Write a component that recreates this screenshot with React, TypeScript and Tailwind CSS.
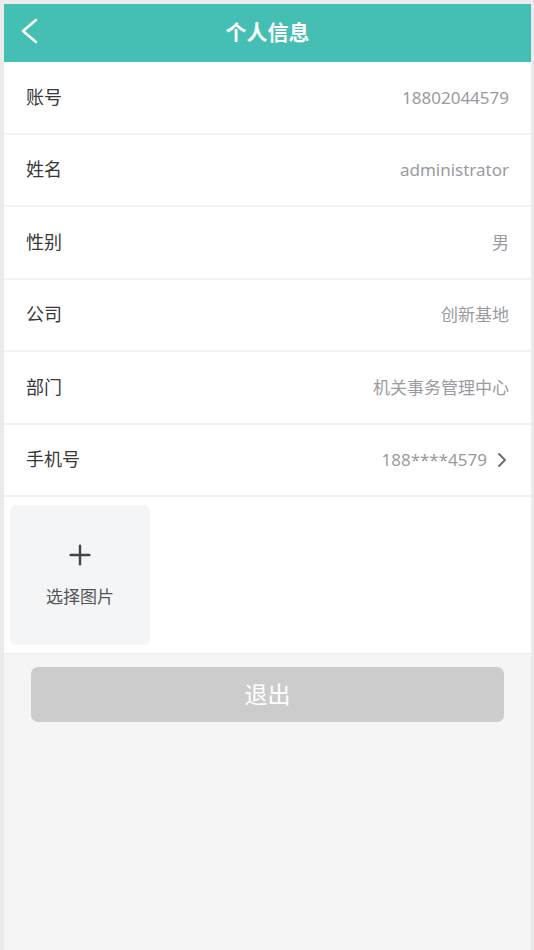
import { Plus } from 'lucide-react';

const FONT = { fontFamily: '"Noto Sans", "Noto Sans CJK SC", sans-serif' };

const ROWS = [
  { label: '账号', value: '18802044579' },
  { label: '姓名', value: 'administrator' },
  { label: '性别', value: '男' },
  { label: '公司', value: '创新基地' },
  { label: '部门', value: '机关事务管理中心' },
  { label: '手机号', value: '188****4579', arrow: true },
];

export default function App() {
  return (
    <div
      className="w-[534px] h-[950px] bg-[#f5f5f5] border-l-4 border-t-4 border-r-[3px] border-[#ebebeb] flex flex-col"
      style={FONT}
    >
      {/* 顶部栏 */}
      <div className="h-[58px] bg-[#45bfb3] flex items-center relative shrink-0">
        <svg className="absolute left-[14px] top-[12px]" width="24" height="30" viewBox="0 0 24 30" fill="none">
          <polyline points="18,4 5,15 18,26" stroke="white" strokeWidth="2.6" strokeLinecap="round" strokeLinejoin="round" />
        </svg>
        <h1 className="flex-1 text-center text-white text-[21px] font-bold">个人信息</h1>
      </div>

      {/* 信息列表 */}
      <div className="bg-white">
        {ROWS.map((r) => (
          <div
            key={r.label}
            className="h-[72.5px] border-b-2 border-[#f2f2f2] flex items-center justify-between pl-[22px] pr-[22px]"
          >
            <span className="text-[18px] text-[#383838]">{r.label}</span>
            <span className="flex items-center text-[17px] text-[#999ba0]">
              {r.value}
              {r.arrow && (
                <svg className="ml-[10px] mr-[2px]" width="10" height="16" viewBox="0 0 10 16" fill="none">
                  <polyline points="2,2 8,8 2,14" stroke="#6b6f75" strokeWidth="2" strokeLinecap="round" strokeLinejoin="round" />
                </svg>
              )}
            </span>
          </div>
        ))}

        {/* 上传图片 */}
        <div className="pt-[8px] pb-[8px] pl-[6px] border-b border-[#eeeeee]">
          <div className="w-[140px] h-[140px] rounded-[6px] bg-[#f4f5f7] flex flex-col items-center justify-center">
            <Plus className="w-8 h-8 text-[#444] -mt-[2px]" strokeWidth={1.8} />
            <span className="text-[17px] text-[#555] mt-[13px]">选择图片</span>
          </div>
        </div>
      </div>

      {/* 退出 */}
      <div className="px-[27px] pt-[13px]">
        <button className="w-full h-[55px] rounded-[7px] bg-[#cccccc] text-white text-[23px]">退出</button>
      </div>
    </div>
  );
}
